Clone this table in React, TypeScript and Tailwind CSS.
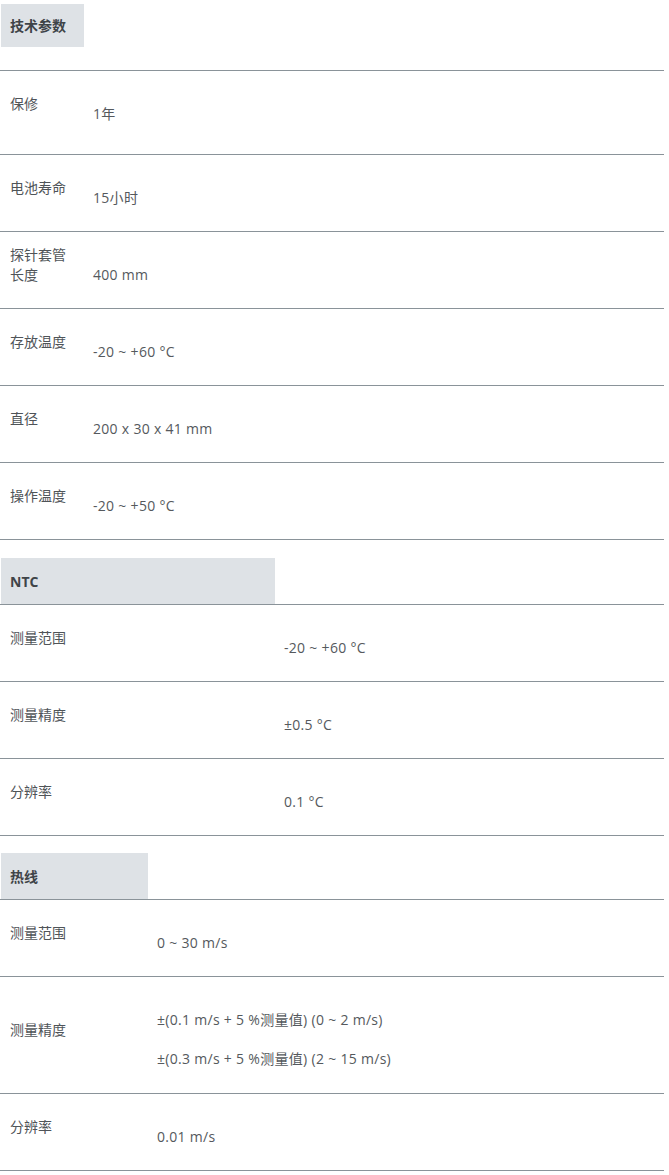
const font = { fontFamily: '"Open Sans", "Noto Sans CJK SC", sans-serif' };

type Row = { label: string[]; values: string[]; labelPt?: string; h?: string };

const Header = ({ title, w }: { title: string; w: string }) => (
  <div className="border-b border-[#8a9399]">
    <div className={`${w} h-[46px] ml-px bg-[#dee2e6] flex items-center pl-[9px] text-[14px] font-bold text-[#3f4448]`}>
      {title}
    </div>
  </div>
);

const SpecRow = ({ row, col }: { row: Row; col: string }) => (
  <div className={`flex border-b border-[#8a9399] overflow-hidden box-border ${row.h ?? "h-[77px]"}`}>
    <div className={`${col} shrink-0 pl-[10px] ${row.labelPt ?? "pt-[23px]"} text-[14px] text-[#4f5458]`}>
      {row.label.map((l) => (
        <div key={l} className="h-[20px] leading-[20px]">{l}</div>
      ))}
    </div>
    <div className="pl-[9px] pt-[33px] flex flex-col gap-[19px] text-[14px] tracking-[0.3px] text-[#55595d]">
      {row.values.map((v) => (
        <div key={v} className="h-[20px] leading-[20px]">{v}</div>
      ))}
    </div>
  </div>
);

const general: Row[] = [
  { label: ["保修"], values: ["1年"], h: "h-[84px]" },
  { label: ["电池寿命"], values: ["15小时"] },
  { label: ["探针套管", "长度"], values: ["400 mm"], labelPt: "pt-[13px]" },
  { label: ["存放温度"], values: ["-20 ~ +60 °C"] },
  { label: ["直径"], values: ["200 x 30 x 41 mm"] },
  { label: ["操作温度"], values: ["-20 ~ +50 °C"] },
];

const ntc: Row[] = [
  { label: ["测量范围"], values: ["-20 ~ +60 °C"] },
  { label: ["测量精度"], values: ["±0.5 °C"] },
  { label: ["分辨率"], values: ["0.1 °C"] },
];

const hotwire: Row[] = [
  { label: ["测量范围"], values: ["0 ~ 30 m/s"] },
  {
    label: ["测量精度"],
    values: ["±(0.1 m/s + 5 %测量值) (0 ~ 2 m/s)", "±(0.3 m/s + 5 %测量值) (2 ~ 15 m/s)"],
    labelPt: "pt-[43px]",
    h: "h-[117px]",
  },
  { label: ["分辨率"], values: ["0.01 m/s"] },
];

export default function App() {
  return (
    <div className="w-[664px] bg-white" style={font}>
      <div className="h-[71px] pt-[4px] border-b border-[#8a9399]">
        <div className="w-[83px] h-[43px] ml-px bg-[#dee2e6] flex items-center pl-[9px] text-[14px] font-bold text-[#3f4448]">
          技术参数
        </div>
      </div>
      {general.map((r) => (
        <SpecRow key={r.label.join()} row={r} col="w-[84px]" />
      ))}

      <div className="h-[18px]" />
      <Header title="NTC" w="w-[274px]" />
      {ntc.map((r) => (
        <SpecRow key={r.label.join()} row={r} col="w-[275px]" />
      ))}

      <div className="h-[17px]" />
      <Header title="热线" w="w-[147px]" />
      {hotwire.map((r) => (
        <SpecRow key={r.label.join()} row={r} col="w-[148px]" />
      ))}
    </div>
  );
}
